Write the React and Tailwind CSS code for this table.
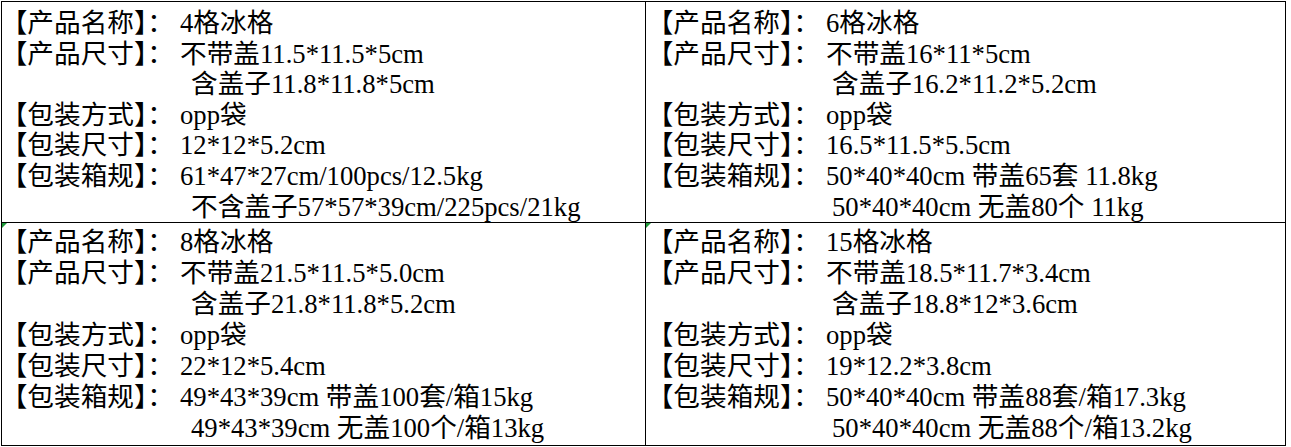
import React from 'react';

const cells = [
  {
    name: '4格冰格',
    size: '不带盖11.5*11.5*5cm',
    lid: '含盖子11.8*11.8*5cm',
    pack: 'opp袋',
    packSize: '12*12*5.2cm',
    box: '61*47*27cm/100pcs/12.5kg',
    box2: '不含盖子57*57*39cm/225pcs/21kg',
  },
  {
    name: '6格冰格',
    size: '不带盖16*11*5cm',
    lid: '含盖子16.2*11.2*5.2cm',
    pack: 'opp袋',
    packSize: '16.5*11.5*5.5cm',
    box: '50*40*40cm 带盖65套 11.8kg',
    box2: '50*40*40cm 无盖80个 11kg',
  },
  {
    name: '8格冰格',
    size: '不带盖21.5*11.5*5.0cm',
    lid: '含盖子21.8*11.8*5.2cm',
    pack: 'opp袋',
    packSize: '22*12*5.4cm',
    box: '49*43*39cm 带盖100套/箱15kg',
    box2: '49*43*39cm 无盖100个/箱13kg',
  },
  {
    name: '15格冰格',
    size: '不带盖18.5*11.7*3.4cm',
    lid: '含盖子18.8*12*3.6cm',
    pack: 'opp袋',
    packSize: '19*12.2*3.8cm',
    box: '50*40*40cm 带盖88套/箱17.3kg',
    box2: '50*40*40cm 无盖88个/箱13.2kg',
  },
];

// brackets are half-width in the sheet, colon stays full width
const Label = ({ text }) => (
  <span className="w-[166px] shrink-0">
    <span className="[font-feature-settings:'halt']">【</span>
    {text}
    <span className="[font-feature-settings:'halt']">】</span>：
  </span>
);

const Row = ({ label, value }) => (
  <div className="flex whitespace-pre">
    <Label text={label} />
    <span>{value}</span>
  </div>
);

const More = ({ value, indent }) => (
  <div className={`${indent} whitespace-pre`}>{value}</div>
);

const SpecCell = ({ item, right, bottom }) => {
  const indent = right ? 'pl-[172px]' : 'pl-[177px]';
  return (
    <div
      className={`relative ${right ? 'pl-[14px]' : 'pl-[12px] border-r border-black'} ${
        bottom ? 'pt-[4px] leading-[31px]' : 'pt-[6px] leading-[30.6px] border-b border-black'
      }`}
    >
      {bottom && (
        <span className="absolute left-0 top-0 w-0 h-0 border-t-[5px] border-r-[5px] border-t-[#1f9a3a] border-r-transparent" />
      )}
      <Row label="产品名称" value={item.name} />
      <Row label="产品尺寸" value={item.size} />
      <More value={item.lid} indent={indent} />
      <Row label="包装方式" value={item.pack} />
      <Row label="包装尺寸" value={item.packSize} />
      <Row label="包装箱规" value={item.box} />
      <More value={item.box2} indent={indent} />
    </div>
  );
};

export default function App() {
  return (
    <div className="w-[1291px] h-[447px] bg-white pt-px pl-px overflow-hidden">
      <div className="w-[1285px] h-[445px] border border-black grid grid-cols-[644px_639px] grid-rows-[221px_222px] text-[26.67px] text-black font-['Liberation_Serif','Noto_Sans_CJK_SC',serif]">
        <SpecCell item={cells[0]} />
        <SpecCell item={cells[1]} right />
        <SpecCell item={cells[2]} bottom />
        <SpecCell item={cells[3]} right bottom />
      </div>
    </div>
  );
}
